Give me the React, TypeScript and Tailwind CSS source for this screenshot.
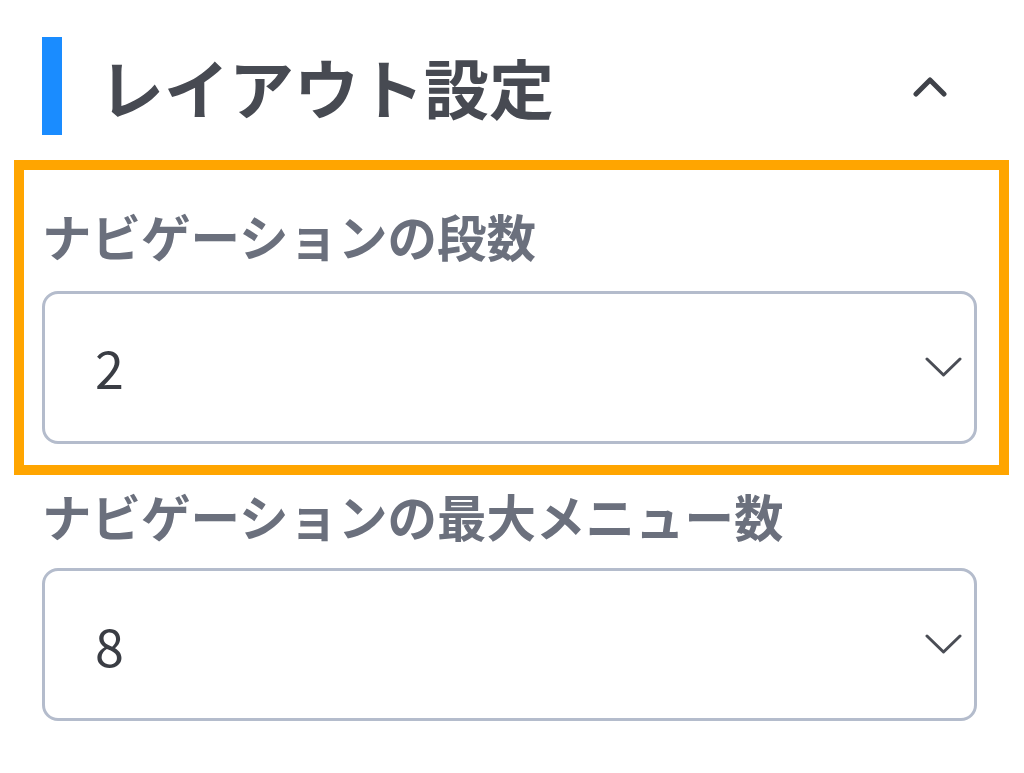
import React from 'react';

const font = { fontFamily: '"Noto Sans CJK JP", "Noto Sans", sans-serif' };

function ChevronDown() {
  return (
    <svg width="37" height="21" viewBox="0 0 37 21" fill="none" className="shrink-0">
      <polyline points="2,2 18.5,18 35,2" stroke="#4a4d55" strokeWidth="3" strokeLinecap="round" strokeLinejoin="round" />
    </svg>
  );
}

function ChevronUp() {
  return (
    <svg width="34" height="22" viewBox="0 0 34 22" fill="none" className="shrink-0">
      <polyline points="3,19 17,5 31,19" stroke="#3f4249" strokeWidth="5" strokeLinecap="round" strokeLinejoin="round" />
    </svg>
  );
}

function Select({ value }: { value: string }) {
  return (
    <div className="flex h-[153px] items-center justify-between rounded-[16px] border-[3px] border-[#b4bccc] bg-white pl-[50px] pr-[12px]">
      <span className="text-[52px] leading-none font-normal text-[#3a3d44]">{value}</span>
      <ChevronDown />
    </div>
  );
}

export default function App() {
  return (
    <div className="min-h-[773px] bg-white pl-[42px] pr-[47px] pt-[37px]" style={font}>
      {/* Section header */}
      <div className="flex h-[98px] items-center">
        <div className="h-[98px] w-[20px] bg-[#1a8cff]" />
        <h2 className="ml-[37px] flex-1 text-[65px] font-bold leading-none text-[#474a52]">レイアウト設定</h2>
        <div className="mr-[30px]">
          <ChevronUp />
        </div>
      </div>

      {/* Highlighted field */}
      <div className="ml-[-28px] mr-[-32px] mt-[25px] border-[10px] border-[#ffa500] pb-[21px] pl-[18px] pr-[22px] pt-[41px]">
        <label className="block text-[49.5px] font-bold leading-none text-[#6b707d]">ナビゲーションの段数</label>
        <div className="mt-[30px]">
          <Select value="2" />
        </div>
      </div>

      <label className="mt-[16px] block text-[49.5px] font-bold leading-none text-[#6b707d]">ナビゲーションの最大メニュー数</label>
      <div className="mt-[28px]">
        <Select value="8" />
      </div>
    </div>
  );
}
